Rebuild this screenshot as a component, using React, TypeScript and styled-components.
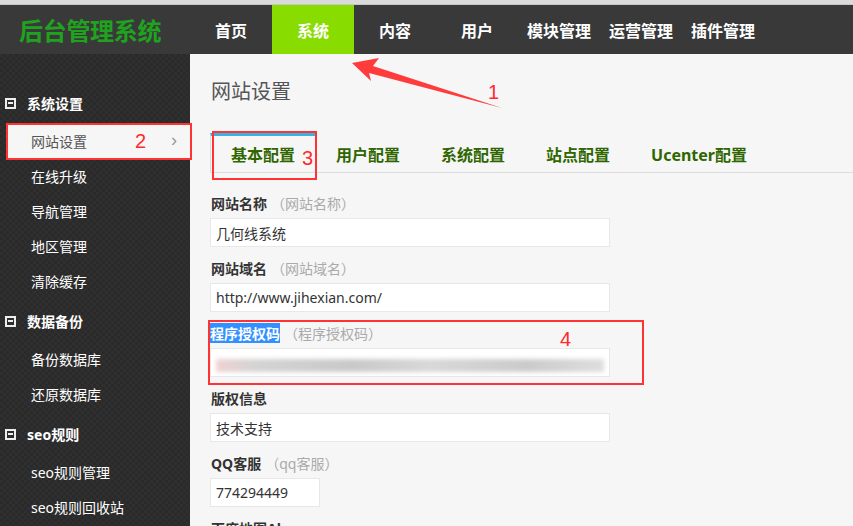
import React from 'react'
import styled, { createGlobalStyle } from 'styled-components'

const GlobalStyle = createGlobalStyle`
  html, body {
    margin: 0;
    padding: 0;
    height: 100%;
    overflow: hidden;
    background: #f6f6f6;
    font-family: 'Noto Sans', 'Noto Sans CJK SC', sans-serif;
  }
  * { box-sizing: border-box; }
`

const navItems = ['首页', '系统', '内容', '用户', '模块管理', '运营管理', '插件管理']

const menu = [
  { title: '系统设置', items: ['网站设置', '在线升级', '导航管理', '地区管理', '清除缓存'] },
  { title: '数据备份', items: ['备份数据库', '还原数据库'] },
  { title: 'seo规则', items: ['seo规则管理', 'seo规则回收站'] },
]

const tabs = ['基本配置', '用户配置', '系统配置', '站点配置', 'Ucenter配置']

const App = () => {
  return (
    <>
      <GlobalStyle />
      <Page>
        <TopStrip />
        <Header>
          <Logo>后台管理系统</Logo>
          <Nav>
            {navItems.map((n) => (
              <NavItem key={n} $active={n === '系统'}>
                {n}
              </NavItem>
            ))}
          </Nav>
        </Header>
        <Body>
          <Sidebar>
            {menu.map((g) => (
              <Group key={g.title}>
                <GroupTitle>
                  <MinusBox />
                  {g.title}
                </GroupTitle>
                {g.items.map((i) => (
                  <MenuItem key={i} $active={i === '网站设置'}>
                    {i}
                    {i === '网站设置' && <Chevron>›</Chevron>}
                  </MenuItem>
                ))}
              </Group>
            ))}
          </Sidebar>
          <Main>
            <PageTitle>网站设置</PageTitle>
            <Tabs>
              {tabs.map((t, idx) => (
                <Tab key={t} $active={idx === 0}>
                  {t}
                </Tab>
              ))}
            </Tabs>
            <Form>
              <Field>
                <Label>
                  网站名称<Hint>（网站名称）</Hint>
                </Label>
                <Input>几何线系统</Input>
              </Field>
              <Field>
                <Label>
                  网站域名<Hint>（网站域名）</Hint>
                </Label>
                <Input>http://www.jihexian.com/</Input>
              </Field>
              <Field>
                <Label>
                  <Selected>程序授权码</Selected>
                  <Hint>（程序授权码）</Hint>
                </Label>
                <Input>
                  <Blurred />
                </Input>
              </Field>
              <Field>
                <Label>版权信息</Label>
                <Input>技术支持</Input>
              </Field>
              <Field>
                <Label>
                  QQ客服<Hint>（qq客服）</Hint>
                </Label>
                <Input $width={110}>774294449</Input>
              </Field>
              <Field>
                <Label>百度地图Ak</Label>
              </Field>
            </Form>
          </Main>
        </Body>

        <Arrow width='853' height='526' viewBox='0 0 853 526'>
          <polygon points='352,63 379,58 373,66 502,108 369,73 371,81' fill='#ff3b3b' />
        </Arrow>
        <Mark style={{ left: 488, top: 80 }}>1</Mark>
        <RedBox style={{ left: 6, top: 123, width: 186, height: 37 }} />
        <Mark style={{ left: 135, top: 129 }}>2</Mark>
        <RedBox style={{ left: 212, top: 131, width: 105, height: 49 }} />
        <Mark style={{ left: 302, top: 146 }}>3</Mark>
        <RedBox style={{ left: 208, top: 320, width: 436, height: 65 }} />
        <Mark style={{ left: 560, top: 327 }}>4</Mark>
      </Page>
    </>
  )
}

const Page = styled.div`
  position: relative;
  width: 100%;
  height: 100vh;
  display: flex;
  flex-direction: column;
`

const TopStrip = styled.div`
  height: 5px;
  background: #dadada;
  border-bottom: 1px solid #c8c8c8;
`

const Header = styled.header`
  height: 49px;
  background: #393939;
  display: flex;
  align-items: stretch;
`

const Logo = styled.div`
  width: 190px;
  padding-left: 19px;
  display: flex;
  align-items: center;
  font-size: 24px;
  font-weight: 700;
  color: #1fa31f;
  letter-spacing: -0.3px;
`

const Nav = styled.nav`
  display: flex;
`

const NavItem = styled.div<{ $active?: boolean }>`
  width: 82px;
  display: flex;
  align-items: center;
  justify-content: center;
  font-size: 16px;
  font-weight: 700;
  color: #fff;
  background: ${(p) => (p.$active ? '#88dc00' : 'transparent')};
`

const Body = styled.div`
  flex: 1;
  display: flex;
  min-height: 0;
`

const Sidebar = styled.aside`
  width: 190px;
  padding-top: 29px;
  background-color: #2c2c2c;
  background-image: repeating-conic-gradient(#2a2a2a 0 25%, #2f2f2f 0 50%);
  background-size: 6px 6px;
`

const Group = styled.div`
  margin-bottom: 3px;
`

const GroupTitle = styled.div`
  height: 40px;
  display: flex;
  align-items: center;
  padding-left: 5px;
  gap: 11px;
  font-size: 14px;
  font-weight: 700;
  color: #fff;
`

const MinusBox = styled.span`
  width: 11px;
  height: 11px;
  border: 2px solid #eee;
  position: relative;
  &::after {
    content: '';
    position: absolute;
    left: 1px;
    right: 1px;
    top: 2.5px;
    height: 2px;
    background: #eee;
  }
`

const MenuItem = styled.div<{ $active?: boolean }>`
  height: 35px;
  margin-left: 8px;
  padding-left: 23px;
  display: flex;
  align-items: center;
  font-size: 14px;
  color: ${(p) => (p.$active ? '#555' : '#fff')};
  background: ${(p) => (p.$active ? '#f6f6f6' : 'transparent')};
  position: relative;
`

const Chevron = styled.span`
  position: absolute;
  right: 13px;
  top: 7px;
  font-size: 18px;
  color: #999;
  font-family: 'Liberation Sans', sans-serif;
`

const Main = styled.main`
  flex: 1;
  padding: 24px 0 0 20px;
  background: #f6f6f6;
`

const PageTitle = styled.h2`
  margin: 0 0 0 1px;
  font-size: 20px;
  font-weight: 400;
  line-height: 28px;
  color: #555;
`

const Tabs = styled.div`
  margin-top: 27px;
  display: flex;
  height: 40px;
  border-bottom: 1px solid #ddd;
`

const Tab = styled.div<{ $active?: boolean }>`
  padding: 0 20px 0 21px;
  display: flex;
  align-items: center;
  font-size: 16px;
  font-weight: 700;
  color: #2f6600;
  border-top: 3px solid ${(p) => (p.$active ? '#39b3e6' : 'transparent')};
  ${(p) => p.$active && 'border-left: 1px solid #ddd; padding-left: 20px;'}
`

const Form = styled.div`
  padding-top: 20px;
`

const Field = styled.div`
  margin-bottom: 11px;
`

const Label = styled.div`
  height: 20px;
  margin-bottom: 5px;
  display: flex;
  align-items: center;
  padding-left: 1px;
  font-size: 14px;
  font-weight: 700;
  color: #333;
`

const Hint = styled.span`
  margin-left: 4px;
  font-weight: 400;
  color: #aaa;
`

const Selected = styled.span`
  background: #3390ff;
  color: #fff;
  margin-left: -1px;
`

const Input = styled.div<{ $width?: number }>`
  width: ${(p) => p.$width ?? 400}px;
  height: 29px;
  background: #fff;
  border: 1px solid #e8e8e8;
  padding: 0 5px;
  display: flex;
  align-items: center;
  font-size: 14px;
  color: #333;
  overflow: hidden;
`

const Blurred = styled.span`
  display: block;
  width: 390px;
  height: 13px;
  margin-top: 5px;
  background: linear-gradient(
    90deg,
    #f0d2d2 0%,
    #d4d4d4 10%,
    #c9c9c9 35%,
    #d8d8d8 55%,
    #cbcbcb 80%,
    #dedede 100%
  );
  filter: blur(2px);
`

const Arrow = styled.svg`
  position: absolute;
  left: 0;
  top: 0;
  pointer-events: none;
`

const RedBox = styled.div`
  position: absolute;
  border: 2px solid #ff3333;
  pointer-events: none;
`

const Mark = styled.span`
  position: absolute;
  font-family: 'Liberation Sans', sans-serif;
  font-size: 20px;
  color: #ff2a2a;
  line-height: 24px;
`

export default App
